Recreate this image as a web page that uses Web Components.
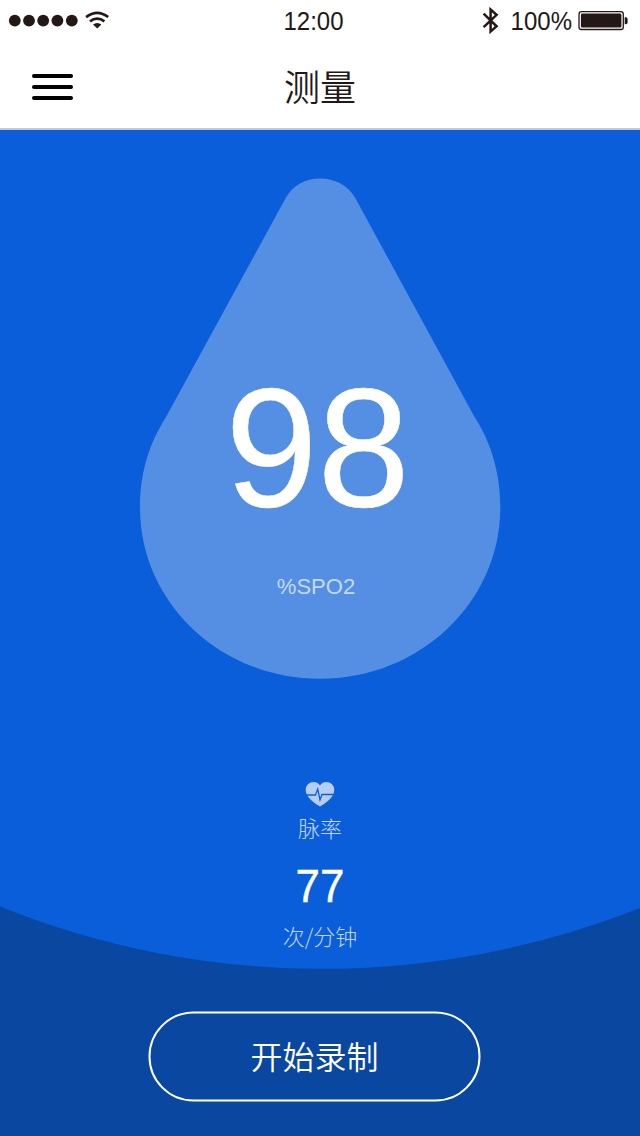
<!DOCTYPE html>
<html lang="zh-CN">
<head>
<meta charset="utf-8">
<title>测量</title>
<style>
html,body{margin:0;padding:0}
body{font-family:"Liberation Sans","Noto Sans CJK SC",sans-serif;width:640px;height:1136px;overflow:hidden;background:#fff}
</style>
</head>
<body>
<measure-screen></measure-screen>
<script>
function define(name, html){
  const t=document.createElement('template');
  t.innerHTML=html;
  customElements.define(name,class extends HTMLElement{
    constructor(){super();this.attachShadow({mode:'open'}).appendChild(t.content.cloneNode(true));}
  });
}

define('status-bar',`
<style>
:host{display:grid;grid-template-columns:1fr auto 1fr;align-items:center;box-sizing:border-box;height:42px;padding:0 12px 0 8px;color:#231815;font-size:24px;line-height:42px}
.left,.right{display:flex;align-items:center}
.right{justify-content:flex-end}
svg{display:block;flex:none}
.time{margin-left:-9px;transform:translateY(.6px) scaleY(1.04)}
.pct{margin:0 6px 0 11px;transform:translateY(.8px) scaleY(1.04)}
</style>
<div class="left">
<svg width="104" height="42" viewBox="8 0 104 42" fill="#231815">
<circle cx="14.8" cy="20.6" r="5.9"/><circle cx="29" cy="20.6" r="5.9"/><circle cx="43.2" cy="20.6" r="5.9"/><circle cx="57.4" cy="20.6" r="5.9"/><circle cx="71.8" cy="20.6" r="5.9"/>
<g fill="none" stroke="#231815" stroke-width="2.6"><path d="M86.1 17.1Q97.2 8.5 108.2 17.1"/><path d="M90 21.4Q97.2 15.9 104.4 21.4"/></g>
<path d="M93 24.600Q97.200 21.400 101.400 24.600L97.200 28.400Z"/>
</svg>
</div>
<span class="time">12:00</span>
<div class="right">
<svg width="18" height="42" viewBox="482 0 18 42" fill="none" stroke="#231815" stroke-width="2.5"><path d="M483.6 13.7L496.6 26.3L490.6 31.6V9.6L496.6 14.8L483.6 27.2"/></svg>
<span class="pct">100%</span>
<svg width="50" height="42" viewBox="578 0 50 42"><rect x="579" y="11.7" width="44.3" height="17.8" rx="2.6" fill="none" stroke="#231815" stroke-width="1.3"/><rect x="580.9" y="13.6" width="40.5" height="14" rx="1.4" fill="#231815"/><path d="M624.7 17.2H625.8Q627.6 17.2 627.6 19V22.4Q627.6 24.2 625.8 24.2H624.7Z" fill="#231815"/></svg>
</div>`);

define('nav-bar',`
<style>
:host{display:grid;grid-template-columns:1fr auto 1fr;align-items:center;box-sizing:border-box;height:88px;padding:0 32px;border-bottom:2px solid #c5c9d2}
.menu{display:flex;flex-direction:column;gap:7px;width:41px;margin-top:4px}
i{height:4px;border-radius:2px;background:#000}
.title{font:350 36px/50px "Noto Sans CJK SC",sans-serif;color:#231815;margin-top:0}
</style>
<div class="menu"><i></i><i></i><i></i></div>
<div class="title"><slot></slot></div>`);

define('spo-drop',`
<style>
:host{display:flex;flex-direction:column;align-items:center;position:relative;width:361px;height:501px;margin:0 auto;color:#fff}
svg{position:absolute;inset:0}
.value,.unit{position:relative}
.value{font-size:166px;line-height:166px;margin:187px 0 0 -5px;transform:scaleY(1.015);-webkit-text-stroke:.5px #fff}
.unit{font-size:22px;line-height:26px;margin:43px 0 0 -8px;color:#c5d9f6}
</style>
<svg width="361" height="501" viewBox="140 178 361 501"><path d="M286 197.500C293 185 306 178.400 320 178.400S348 185 355 197.500L474 416C489 439 500.300 469 500.300 507.500C500.300 602 420 678.800 320 678.800S140 602 140 507.500C140 469 151 441 166 417Z" fill="#558fe3"/></svg>
<div class="value"><slot></slot></div>
<div class="unit"><slot name="unit"></slot></div>`);

define('pulse-rate',`
<style>
:host{display:flex;flex-direction:column;align-items:center;color:#c0d6f6;font:300 22px/32px "Noto Sans CJK SC",sans-serif}
svg{display:block}
.label{margin-top:4px;font-weight:300}
.value{font:44px/50px "Liberation Sans",sans-serif;color:#fff;margin-top:18px;-webkit-text-stroke:.35px #fff;transform:translateY(.5px) scaleY(1.03)}
.unit{margin-top:8px}
</style>
<svg width="30" height="25" viewBox="0 0 30 25"><path d="M15 24.500C11.500 22.500 .7 16 .7 8C.7 -.500 11.500 -2.500 15 3.500C18.500 -2.500 29.300 -.500 29.300 8C29.300 16 18.500 22.500 15 24.500Z" fill="#b6cef5"/><path d="M1 13H10.500L12.700 7L15 18L17 12.500H29" fill="none" stroke="#0c5edb" stroke-width="1.300"/></svg>
<div class="label"><slot name="label"></slot></div>
<div class="value"><slot></slot></div>
<div class="unit"><slot name="unit"></slot></div>`);

define('record-button',`
<style>
:host{display:block;width:332px;height:90px;transform:translate(-.5px,-.5px)}
button{display:block;box-sizing:border-box;width:100%;height:100%;padding:0 0 4px;border:2px solid #fff;border-radius:45px;background:none;color:#fff;font:350 32px/46px "Noto Sans CJK SC",sans-serif}
</style>
<button type="button"><slot></slot></button>`);

define('measure-screen',`
<style>
:host{display:flex;flex-direction:column;width:640px;height:1136px}
main{flex:1;position:relative;display:flex;flex-direction:column;background:#0b5ed9;padding-top:48px;box-sizing:border-box}
.floor{position:absolute;left:0;bottom:0}
spo-drop,pulse-rate,record-button{position:relative}
pulse-rate{margin-top:103px}
record-button{margin:61px 0 0 149px}
</style>
<status-bar></status-bar>
<nav-bar>测量</nav-bar>
<main>
<svg class="floor" width="640" height="236" viewBox="0 900 640 236"><path d="M0 906.500A862 862 0 0 0 640 908V1136H0Z" fill="#0947a1"/></svg>
<spo-drop>98<span slot="unit">%SPO2</span></spo-drop>
<pulse-rate><span slot="label">脉率</span>77<span slot="unit">次/分钟</span></pulse-rate>
<record-button>开始录制</record-button>
</main>`);
</script>
</body>
</html>
